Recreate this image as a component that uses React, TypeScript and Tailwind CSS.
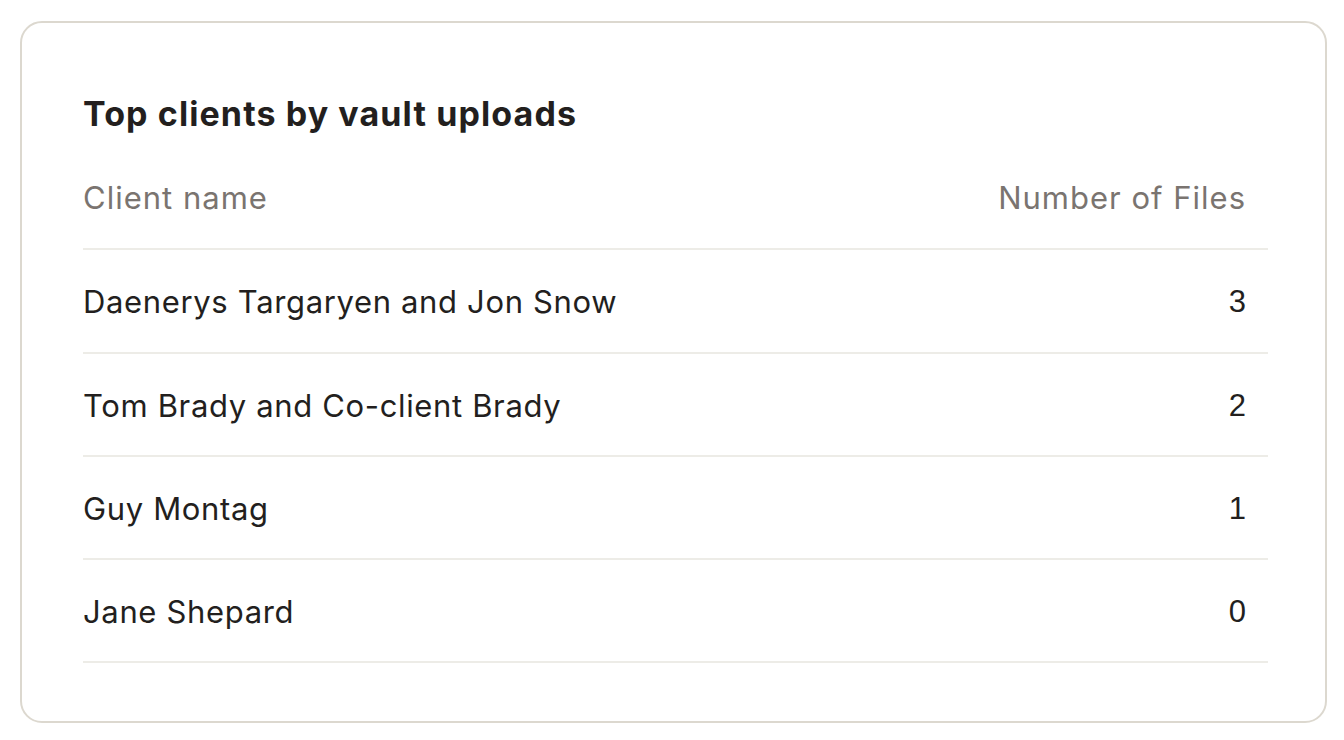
const rows = [
  { name: 'Daenerys Targaryen and Jon Snow', files: 3 },
  { name: 'Tom Brady and Co-client Brady', files: 2 },
  { name: 'Guy Montag', files: 1 },
  { name: 'Jane Shepard', files: 0 },
];

export default function App() {
  return (
    <div className="min-h-[740px] w-[1344px] bg-white pl-[20px] pt-[21px] font-['Inter',sans-serif]">
      <div className="flex h-[702px] w-[1307px] flex-col rounded-[22px] border-2 border-[#dcd8cf] bg-white pl-[61px] pr-[57px] pt-[71px]">
        <h2 className="text-[34px] font-bold leading-[40px] tracking-[1.1px] text-[#231f1e]">
          Top clients by vault uploads
        </h2>

        <table className="mt-[29px] w-full border-collapse">
          <thead>
            <tr className="border-b-2 border-[#edece7]">
              <th className="h-[86px] pb-[14px] text-left align-middle text-[31px] font-normal tracking-[1px] text-[#7a7470]">
                Client name
              </th>
              <th className="h-[86px] pb-[14px] pr-[22px] text-right align-middle text-[31px] font-normal tracking-[1px] text-[#7a7470]">
                Number of Files
              </th>
            </tr>
          </thead>
          <tbody>
            {rows.map((r, i) => (
              <tr key={r.name} className={`border-b-2 border-[#edece7] ${i === 0 ? 'h-[104px]' : 'h-[103px]'}`}>
                <td className="pt-[3px] align-middle text-[31px] tracking-[0.65px] text-[#231f1e]">{r.name}</td>
                <td className="pt-[3px] pr-[22px] text-right align-middle font-['Liberation_Sans',sans-serif] text-[31px] text-[#231f1e]">
                  {r.files}
                </td>
              </tr>
            ))}
          </tbody>
        </table>
      </div>
    </div>
  );
}
